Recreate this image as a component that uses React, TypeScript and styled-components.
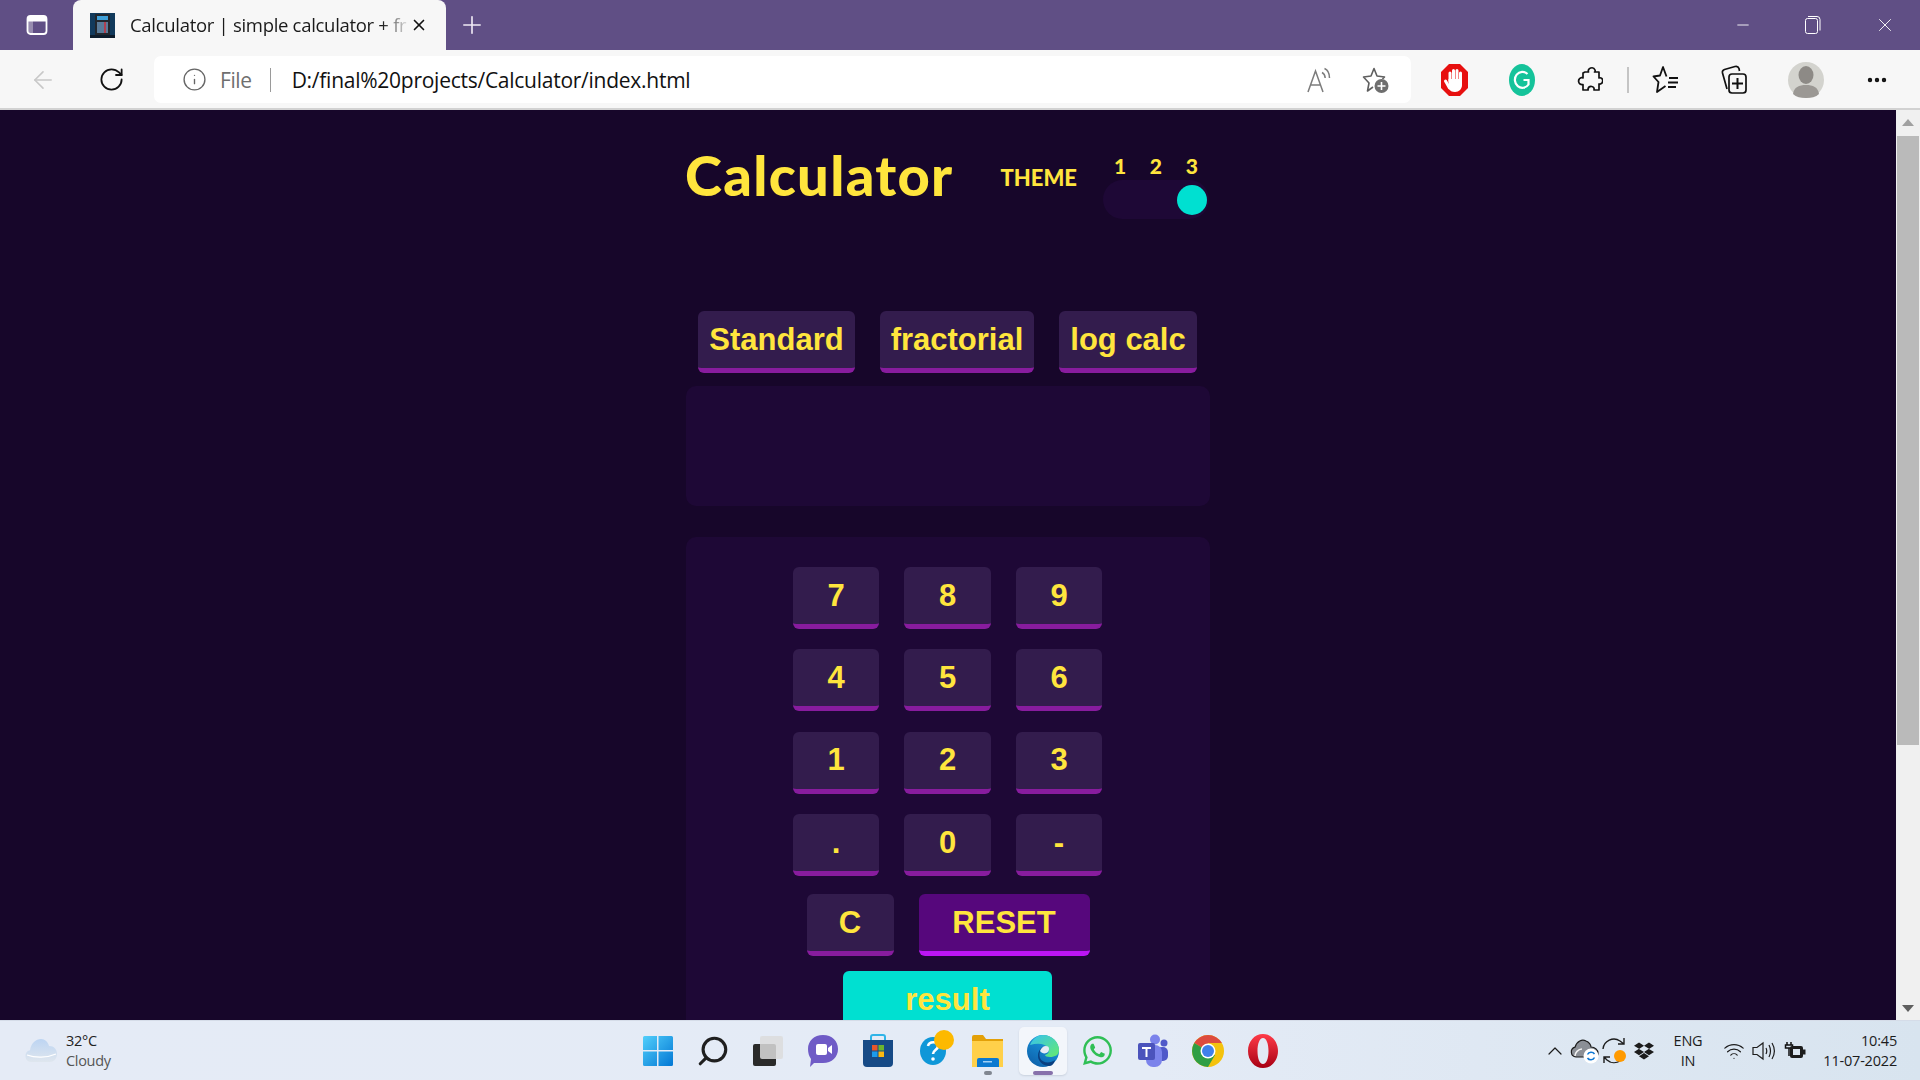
import React from 'react';
import styled, { createGlobalStyle } from 'styled-components';
import { FaDropbox, FaWhatsapp } from 'react-icons/fa';
import { X, Plus, Minus, ArrowLeft, RotateCw, Info, MoreHorizontal, ChevronUp, Search, Wifi } from 'lucide-react';

const GlobalStyle = createGlobalStyle`
  html, body {
    margin: 0;
    height: 100%;
    overflow: hidden;
    font-family: "Open Sans", "Liberation Sans", sans-serif;
  }
  * { box-sizing: border-box; }
`;

const Screen = styled.div`
  width: 1920px;
  height: 1080px;
  display: flex;
  flex-direction: column;
  overflow: hidden;
`;

/* browser chrome */
const TabBar = styled.div`
  height: 50px;
  flex: none;
  display: flex;
  align-items: stretch;
  background: #604f85;
  color: #fff;
`;
const TabToggle = styled.div`
  width: 73px;
  display: flex;
  align-items: center;
  justify-content: center;
`;
const Tab = styled.div`
  width: 373px;
  display: flex;
  align-items: center;
  padding: 0 18px 0 17px;
  background: #f7f7f7;
  border-radius: 8px 8px 0 0;
  color: #1a1a1a;
`;
const TabTitle = styled.span`
  flex: 1;
  margin-left: 15px;
  padding-bottom: 2px;
  font-size: 18.5px;
  letter-spacing: -0.3px;
  white-space: nowrap;
  -webkit-mask-image: linear-gradient(to right, #000 90%, transparent 100%);
  mask-image: linear-gradient(to right, #000 90%, transparent 100%);
`;
const NewTab = styled.div`
  margin-left: 12px;
  width: 28px;
  display: flex;
  align-items: center;
  justify-content: center;
`;
const WindowControls = styled.div`
  margin-left: auto;
  display: flex;
  align-items: center;
  padding-right: 24px;
  gap: 52px;
`;
const Toolbar = styled.div`
  height: 60px;
  flex: none;
  display: flex;
  align-items: center;
  background: #f7f7f7;
  border-bottom: 2px solid #d2d2d2;
  padding-top: 1px;
`;
const NavSlot = styled.div`
  width: 69px;
  display: flex;
  justify-content: center;
  margin-left: ${(p: { $ml?: number }) => p.$ml ?? 0}px;
`;
const AddressBar = styled.div`
  width: 1257px;
  height: 47px;
  margin-left: 8px;
  display: flex;
  align-items: center;
  padding-left: 28px;
  background: #fff;
  border-radius: 7px;
`;
const FileLabel = styled.span`
  margin-left: 13px;
  font-size: 21px;
  letter-spacing: -0.4px;
  color: #6f6f6f;
`;
const AddressSep = styled.span`
  width: 1px;
  height: 24px;
  margin: 0 21px 0 18px;
  background: #9a9a9a;
`;
const Url = styled.span`
  font-size: 21px;
  letter-spacing: -0.26px;
  color: #111;
`;
const AddressIcons = styled.div`
  margin-left: auto;
  display: flex;
  align-items: center;
  gap: 29px;
  padding-right: 21px;
`;
const ToolIcons = styled.div`
  display: flex;
  align-items: center;
  margin-left: 9px;
`;
const ToolSlot = styled.div<{ $w?: number }>`
  width: ${(p) => p.$w ?? 68}px;
  display: flex;
  justify-content: center;
  align-items: center;
`;
const ToolSep = styled.span`
  width: 2px;
  height: 26px;
  background: #c4c4c4;
  margin: 0 3px;
`;

/* page */
const Viewport = styled.div`
  flex: 1;
  min-height: 0;
  display: flex;
`;
const Page = styled.main`
  flex: 1;
  overflow: hidden;
  display: flex;
  align-items: flex-start;
  justify-content: center;
  background: #17062a;
`;
const Calculator = styled.div`
  width: 524px;
  flex: none;
  display: flex;
  flex-direction: column;
  align-items: center;
`;
const Header = styled.header`
  width: 100%;
  height: 201px;
  flex: none;
  display: flex;
  align-items: flex-start;
  color: #ffe53d;
  font-family: Lato, "Liberation Sans", sans-serif;
`;
const Title = styled.h1`
  flex: none;
  margin: 29px 0 0 -1px;
  font-size: 56px;
  line-height: 72px;
  font-weight: 900;
  letter-spacing: 1.3px;
`;
const ThemeLabel = styled.span`
  flex: none;
  margin: 54px 0 0 47px;
  font-size: 22px;
  line-height: 28px;
  font-weight: 900;
`;
const ThemePicker = styled.div`
  flex: none;
  margin: 43px 0 0 26px;
  width: 106px;
`;
const ThemeNumbers = styled.div`
  display: flex;
  justify-content: space-between;
  padding: 0 11px 0 11px;
  font-size: 21px;
  line-height: 26px;
  font-weight: 900;
`;
const Toggle = styled.div`
  height: 39px;
  margin-top: 1px;
  display: flex;
  align-items: center;
  justify-content: flex-end;
  padding-right: 2px;
  border-radius: 20px;
  background: #1e0836;
`;
const Knob = styled.span`
  width: 30px;
  height: 30px;
  border-radius: 50%;
  background: #00e0d1;
`;
const Modes = styled.div`
  flex: none;
  display: flex;
  gap: 25px;
  margin-left: -1px;
`;
const Key = styled.button<{ $width?: number; $variant?: 'plain' | 'strong' | 'accent' }>`
  width: ${(p) => (p.$width ? `${p.$width}px` : 'auto')};
  height: 62px;
  flex: none;
  padding: 0;
  border: 0;
  border-bottom: 5px solid ${(p) => (p.$variant === 'strong' ? '#bc15f4' : '#881c9e')};
  border-radius: 6px;
  background: ${(p) => (p.$variant === 'strong' ? '#56077c' : p.$variant === 'accent' ? '#00e0d1' : '#331c4d')};
  color: #ffe53d;
  font-family: "Liberation Sans", Arial, sans-serif;
  font-size: 31px;
  font-weight: 700;
  text-align: center;
`;
const ResultKey = styled(Key)`
  margin-left: -1px;
`;
const Panel = styled.section`
  width: 100%;
  flex: none;
  background: #1e0836;
  border-radius: 10px;
`;
const Display = styled(Panel)`
  height: 120px;
  margin-top: 13px;
`;
const Keypad = styled(Panel)`
  margin-top: 31px;
  height: 620px;
  padding-top: 30px;
  display: flex;
  flex-direction: column;
  align-items: center;
`;
const Digits = styled.div`
  display: grid;
  grid-template-columns: 86px 87px 86px;
  column-gap: 25px;
  row-gap: 20.4px;
  margin-left: -1px;
`;
const ActionRow = styled.div`
  display: flex;
  gap: 25px;
  margin: 18px 0 15px;
`;
const Scrollbar = styled.div`
  width: 24px;
  flex: none;
  display: flex;
  flex-direction: column;
  align-items: center;
  background: #f0f0f0;
`;
const ScrollArrow = styled.span<{ $down?: boolean }>`
  width: 0;
  height: 0;
  flex: none;
  margin: ${(p) => (p.$down ? 'auto 0 8px' : '9px 0 10px')};
  border-left: 6px solid transparent;
  border-right: 6px solid transparent;
  ${(p) => (p.$down ? 'border-top: 7px solid #5f5f5f;' : 'border-bottom: 7px solid #a0a0a0;')}
`;
const ScrollThumb = styled.span`
  width: 22px;
  height: 609px;
  flex: none;
  background: #bababa;
`;

/* taskbar */
const Taskbar = styled.footer`
  height: 60px;
  flex: none;
  display: grid;
  grid-template-columns: 1fr auto 1fr;
  align-items: center;
  background: linear-gradient(to right, #e5ebf6, #e4ebf6 60%, #d8e4ef);
  border-top: 1px solid #d5dce8;
`;
const Weather = styled.div`
  display: flex;
  align-items: center;
  gap: 9px;
  padding-left: 25px;
`;
const WeatherText = styled.div`
  font-size: 14.5px;
  line-height: 20px;
  letter-spacing: -0.3px;
  color: #222;
`;
const WeatherSub = styled.div`
  color: #555;
`;
const Apps = styled.div`
  display: flex;
`;
const AppSlot = styled.div<{ $active?: boolean }>`
  width: 55px;
  height: 54px;
  position: relative;
  isolation: isolate;
  display: flex;
  align-items: center;
  justify-content: center;
  ${(p) =>
    p.$active &&
    `&::before {
      content: '';
      position: absolute;
      z-index: -1;
      top: 3px;
      left: 3.5px;
      width: 48px;
      height: 48px;
      border-radius: 5px;
      background: #f3f6fb;
      box-shadow: 0 1px 2px #c9d1dd;
    }`}
`;
const AppDot = styled.span<{ $active?: boolean }>`
  position: absolute;
  bottom: 3px;
  left: 50%;
  height: 4px;
  border-radius: 2px;
  transform: translateX(-50%);
  width: ${(p) => (p.$active ? 20 : 8)}px;
  background: ${(p) => (p.$active ? '#8771ab' : '#808690')};
`;
const Tray = styled.div`
  display: flex;
  align-items: center;
  justify-content: flex-end;
  padding-right: 23px;
  color: #1c1c1c;
`;
const TraySlot = styled.div<{ $w: number }>`
  width: ${(p) => p.$w}px;
  display: flex;
  justify-content: center;
  align-items: center;
`;
const TrayText = styled.div<{ $align?: string }>`
  width: 100%;
  font-size: 14.5px;
  line-height: 20px;
  letter-spacing: -0.2px;
  text-align: ${(p) => p.$align ?? 'center'};
`;

const PanelIcon = () => (
  <svg width="24" height="24" viewBox="0 0 24 24" fill="none">
    <rect x="2.5" y="3" width="19" height="18" rx="3" stroke="#fff" strokeWidth="1.8" />
    <rect x="3" y="3.5" width="18" height="5" fill="#fff" />
    <rect x="3" y="8" width="5" height="12" fill="#fff" opacity="0.35" />
  </svg>
);

const Favicon = () => (
  <svg width="25" height="25" viewBox="0 0 25 25">
    <rect width="25" height="25" fill="#123a5c" />
    <rect x="5" y="1" width="15" height="22" rx="1" fill="#22272e" />
    <rect x="7" y="3" width="11" height="4" fill="#3fa0d8" />
    <rect x="7" y="9" width="11" height="11" fill="#5a7b99" />
    <rect x="14" y="9" width="2" height="11" fill="#b04050" />
    <rect y="22" width="25" height="3" fill="#0d1c2b" />
  </svg>
);

const RestoreIcon = () => (
  <svg width="18" height="20" viewBox="0 0 18 20" fill="none" stroke="#fff" strokeWidth="1">
    <rect x="1.5" y="3.5" width="12" height="15" rx="2" />
    <path d="M4 1.5h9a3 3 0 0 1 3 3v11" />
  </svg>
);

const ReadAloud = () => (
  <svg width="28" height="28" viewBox="0 0 28 28" fill="none" stroke="#7c7c7c" strokeWidth="1.5">
    <path d="M3 26 10.5 5 18 26M5.5 19h10" />
    <path d="M17 6.5c2 1 3 3 3.2 5.5M19.5 2.5c3.500 1.500 5 5 5 9.500" />
  </svg>
);

const FavAdd = () => (
  <svg width="28" height="28" viewBox="0 0 28 28" fill="none">
    <path d="M11 21 5.500 25 7 17 1.500 11l7.500-1L12 2.500 15 10l7.500 1-2 2" stroke="#5f5f5f" strokeWidth="1.600" strokeLinejoin="round" />
    <circle cx="19.500" cy="20" r="7" fill="#6e6e6e" />
    <path d="M19.500 16v8M15.500 20h8" stroke="#fff" strokeWidth="1.600" />
  </svg>
);

const StopHand = () => (
  <svg width="27" height="32" viewBox="0 0 27 32">
    <path d="M8 0h11l8 8v16l-8 8H8l-8-8V8z" fill="#e7100f" />
    <path d="M9 17V9M12.500 16V6.500M16 16V6.500M19.500 17V9" stroke="#fff" strokeWidth="3" strokeLinecap="round" />
    <path d="M7.500 15h13.500v6c0 4-3 7-7 7-3 0-5-1-6.500-4z" fill="#fff" />
    <path d="M4.500 17l4 7" stroke="#fff" strokeWidth="3" strokeLinecap="round" />
  </svg>
);

const Grammarly = () => (
  <svg width="26" height="32" viewBox="0 0 26 32">
    <ellipse cx="13" cy="16" rx="13" ry="16" fill="#15c39a" />
    <path d="M18.500 10a7.500 8 0 1 0 1 10.500V16h-5" fill="none" stroke="#fff" strokeWidth="2.200" />
  </svg>
);

const Puzzle = () => (
  <svg width="26" height="30" viewBox="0 0 26 30" fill="none" stroke="#111" strokeWidth="1.700" strokeLinejoin="round">
    <path d="M8 7h3.500c-1.500-4 5-6 6.500-2 .4 1 0 2-.5 2H22v6c4-1.500 5.500 5 .8 6.200-.2 0-.5 0-.8-.2v6h-5c1-4-5-5-6-1 0 .4 0 .7.200 1H6v-5.500c-5 1-6-5.500-1.500-7 .5 0 1 0 1.500.500V8z" />
  </svg>
);

const Favorites = () => (
  <svg width="28" height="30" viewBox="0 0 28 30" fill="none" stroke="#111" strokeWidth="1.800" strokeLinejoin="round">
    <path d="M14.500 11.500 11 2 8 10.500 1.500 11.500l5 5.500L5 27l8.500-6" />
    <path d="M17 13h9M16 17.500h10M16 22h8" />
  </svg>
);

const Collections = () => (
  <svg width="28" height="32" viewBox="0 0 28 32" fill="none" stroke="#111" strokeWidth="1.700" strokeLinejoin="round">
    <path d="M7 25 2.500 9c-.5-2 .5-3 2-3.500L15 2.500c2-.5 3.500.5 4 2l.5 2.500" />
    <rect x="9" y="10" width="17" height="19" rx="3" />
    <path d="M17.500 14v11M12 19.500h11" strokeWidth="2" />
  </svg>
);

const Avatar = () => (
  <svg width="36" height="36" viewBox="0 0 36 36">
    <ellipse cx="18" cy="18" rx="18" ry="18" fill="#d3d3ce" />
    <ellipse cx="18" cy="13" rx="7.500" ry="9" fill="#8d8a86" />
    <path d="M5 32c1-7 6-9 13-9s12 2 13 9c-3 3-8 4-13 4s-10-1-13-4z" fill="#9b9894" />
  </svg>
);

const CloudIcon = () => (
  <svg width="32" height="24" viewBox="0 0 32 24">
    <defs>
      <linearGradient id="cloud" x1="0" y1="0" x2="0" y2="1">
        <stop offset="0" stopColor="#bcd4f2" />
        <stop offset="1" stopColor="#dfe6ee" />
      </linearGradient>
    </defs>
    <path d="M6 23a6 6 0 0 1-1-11.800C6 4 11 0 16 0c4 0 7 3 8 7 5 0 8 3.500 8 8 0 5-3.500 8-7 8z" fill="url(#cloud)" />
    <path d="M2 16c8 3 20 3 29-1" stroke="#fff" strokeWidth="1.200" fill="none" />
  </svg>
);

const WindowsLogo = () => (
  <svg width="30" height="30" viewBox="0 0 30 30">
    <defs>
      <linearGradient id="win" x1="0" y1="0" x2="1" y2="1">
        <stop offset="0" stopColor="#52cffb" />
        <stop offset="1" stopColor="#0277d4" />
      </linearGradient>
    </defs>
    <path d="M0 1.500A1.500 1.500 0 0 1 1.500 0H14v14H0zM15.500 0H28.500A1.500 1.500 0 0 1 30 1.500V14H15.500zM0 15.500H14V30H1.500A1.500 1.500 0 0 1 0 28.500zM15.500 15.500H30V28.500A1.500 1.500 0 0 1 28.500 30H15.500z" fill="url(#win)" />
  </svg>
);

const TaskView = () => (
  <svg width="30" height="30" viewBox="0 0 30 30">
    <rect x="0" y="8" width="23" height="22" rx="2" fill="#2a2a2a" />
    <rect x="7" y="0" width="23" height="23" rx="2" fill="#dcdcdc" fillOpacity="0.85" />
  </svg>
);

const Meet = () => (
  <svg width="30" height="34" viewBox="0 0 30 34">
    <path d="M15 1c9 0 15 6 15 14s-6 14-15 14H6l-4 4 1-8C1 22 0 19 0 15 0 7 6 1 15 1z" fill="#6f5bc6" />
    <rect x="8" y="10" width="11" height="11" rx="2" fill="#fff" />
    <path d="M20 14l4-3v9l-4-3z" fill="#fff" />
  </svg>
);

const Store = () => (
  <svg width="30" height="33" viewBox="0 0 30 33">
    <path d="M8 6V3a2 2 0 0 1 2-2h10a2 2 0 0 1 2 2v3" fill="none" stroke="#2fb4e8" strokeWidth="2" />
    <path d="M0 6h30v23a4 4 0 0 1-4 4H4a4 4 0 0 1-4-4z" fill="#164a86" />
    <rect x="9" y="11" width="5.500" height="5.500" fill="#e8562a" />
    <rect x="15.500" y="11" width="5.500" height="5.500" fill="#6bb52e" />
    <rect x="9" y="17.500" width="5.500" height="5.500" fill="#1c9bec" />
    <rect x="15.500" y="17.500" width="5.500" height="5.500" fill="#fbb810" />
  </svg>
);

const Help = () => (
  <svg width="44" height="42" viewBox="0 0 44 42">
    <ellipse cx="22" cy="21" rx="13" ry="14" fill="#0f97d8" />
    <path d="M17 16c1-5 10-5 10 0 0 4-5 4-5 8" fill="none" stroke="#fff" strokeWidth="2.600" />
    <circle cx="22" cy="29" r="1.800" fill="#fff" />
    <ellipse cx="33" cy="10" rx="10" ry="10" fill="#fdb900" />
  </svg>
);

const Folder = () => (
  <svg width="31" height="32" viewBox="0 0 31 32">
    <path d="M0 2a2 2 0 0 1 2-2h9l3 4h17v6H0z" fill="#e3a008" />
    <path d="M0 6h31v26H0z" fill="#ffd04a" />
    <path d="M5 32v-7a2 2 0 0 1 2-2h18a2 2 0 0 1 2 2v7z" fill="#0b79d0" />
    <rect x="11" y="26" width="9" height="1.500" fill="#9fd0f5" />
  </svg>
);

const Edge = () => (
  <svg width="32" height="32" viewBox="0 0 32 32">
    <defs>
      <linearGradient id="edgeA" x1="0" y1="1" x2="0.6" y2="0">
        <stop offset="0" stopColor="#0c59a4" />
        <stop offset="1" stopColor="#1b9de2" />
      </linearGradient>
      <linearGradient id="edgeB" x1="0" y1="0" x2="1" y2="1">
        <stop offset="0" stopColor="#35c1f1" />
        <stop offset="1" stopColor="#66eb6e" />
      </linearGradient>
    </defs>
    <circle cx="16" cy="16" r="16" fill="url(#edgeA)" />
    <path d="M3 10C6 3 11 0 16 0c9 0 16 7 16 15 0 5-4 7-9 7-3 0-5-1-5-2 3-1 5-3 3-7-3-5-11-5-18-3z" fill="url(#edgeB)" />
    <path d="M28 25c-5 4-13 3-15-2-2-6 2-11 7-12-5 0-9 4-9 10 0 6 6 10 11 10 3 0 5-2 6-6z" fill="#0a3f80" />
    <path d="M13 16c1-3 3-5 6-5 3 0 4 3 2 6-2 2-6 2-8-1z" fill="#e5ebf6" />
  </svg>
);

const Teams = () => (
  <svg width="30" height="34" viewBox="0 0 30 34">
    <circle cx="17" cy="5.500" r="5" fill="#7b83eb" />
    <circle cx="26" cy="9" r="3.500" fill="#5059c9" />
    <rect x="19" y="13" width="11" height="14" rx="5" fill="#5059c9" />
    <rect x="8" y="11" width="16" height="22" rx="7" fill="#7b83eb" />
    <rect x="0" y="9" width="17" height="17" rx="2" fill="#4b53bc" />
    <path d="M4 13h9v2H9.500v8h-2v-8H4z" fill="#fff" />
  </svg>
);

const Chrome = () => (
  <svg width="32" height="32" viewBox="0 0 32 32">
    <circle cx="16" cy="16" r="16" fill="#f4c20d" />
    <path d="M16 16 2.200 8A16 16 0 0 1 29.900 8H16z" fill="#dd4b3e" />
    <path d="M16 16 2.200 8A16 16 0 0 0 16 32l7-12z" fill="#2f9e44" />
    <circle cx="16" cy="16" r="7.500" fill="#fff" />
    <circle cx="16" cy="16" r="6" fill="#3f80ea" />
  </svg>
);

const Opera = () => (
  <svg width="30" height="34" viewBox="0 0 30 34">
    <defs>
      <linearGradient id="opera" x1="0" y1="0" x2="0" y2="1">
        <stop offset="0" stopColor="#ff3b48" />
        <stop offset="1" stopColor="#a70014" />
      </linearGradient>
    </defs>
    <path fillRule="evenodd" d="M15 0c8.500 0 15 7.500 15 17s-6.500 17-15 17S0 26.500 0 17 6.500 0 15 0zm0 4c-3.500 0-5.500 6-5.500 13s2 13 5.500 13 5.500-6 5.500-13-2-13-5.500-13z" fill="url(#opera)" />
  </svg>
);

const SyncIcon = () => (
  <svg width="30" height="30" viewBox="0 0 30 30" fill="none" stroke="#1c1c1c" strokeWidth="1.400">
    <path d="M3 13a11 11 0 0 1 17-8l4 3M24 2v6h-6" />
    <path d="M20 25a11 11 0 0 1-13 -1l-3-3M4 27v-6h6" />
    <circle cx="20" cy="20" r="6" fill="#ff9a00" stroke="none" />
  </svg>
);

const OneDrive = () => (
  <svg width="30" height="26" viewBox="0 0 30 26">
    <path d="M6 19a5 5 0 0 1-1-9.800C7 3 12 1 16 3c3 1 5 4 5 6 4 0 7 3 7 6 0 2-1 4-3 4z" fill="#8b8f96" stroke="#1c1c1c" strokeWidth="1.200" />
    <path d="M5 18c0-3 3-7 7-7" stroke="#f2f2f2" strokeWidth="1.500" fill="none" />
    <circle cx="21" cy="18" r="7.500" fill="#fff" />
    <path d="M17.500 16.500a4 4 0 0 1 7-.5M24.500 19.500a4 4 0 0 1-7 .5" fill="none" stroke="#0f78d4" strokeWidth="1.500" />
  </svg>
);

const Speaker = () => (
  <svg width="24" height="22" viewBox="0 0 24 22" fill="none" stroke="#1c1c1c" strokeWidth="1.200">
    <path d="M1 7.500h4L11 3v16l-6-4.500H1z" />
    <path d="M14 8c1 2 1 4 0 6M17 5c2 4 2 8 0 12M20 3c3 5 3 11 0 16" />
  </svg>
);

const Battery = () => (
  <svg width="22" height="20" viewBox="0 0 22 20">
    <path d="M3 1v3M7 1v3M1.500 4h7v3h-7zM5 7v8" stroke="#111" strokeWidth="1.500" fill="none" />
    <rect x="6" y="5" width="13" height="12" rx="2" fill="#1c1c1c" />
    <rect x="19" y="8.500" width="2.500" height="5" fill="#1c1c1c" />
    <rect x="9" y="8" width="7" height="6" fill="#dbe5ef" />
  </svg>
);

const digits = ['7', '8', '9', '4', '5', '6', '1', '2', '3', '.', '0', '-'];

const App: React.FC = () => {
  return (
    <Screen>
      <GlobalStyle />
      <TabBar>
        <TabToggle>
          <PanelIcon />
        </TabToggle>
        <Tab>
          <Favicon />
          <TabTitle>Calculator | simple calculator + fr</TabTitle>
          <X size={18} color="#111" strokeWidth={2.2} />
        </Tab>
        <NewTab>
          <Plus size={28} color="#efeaf5" strokeWidth={1.4} />
        </NewTab>
        <WindowControls>
          <Minus size={18} color="#fff" strokeWidth={1.2} />
          <RestoreIcon />
          <X size={22} color="#fff" strokeWidth={1} />
        </WindowControls>
      </TabBar>
      <Toolbar>
        <NavSlot $ml={8}>
          <ArrowLeft size={28} color="#c8c8c8" strokeWidth={1.4} />
        </NavSlot>
        <NavSlot>
          <RotateCw size={27} color="#111" strokeWidth={1.6} />
        </NavSlot>
        <AddressBar>
          <Info size={25} color="#666" strokeWidth={1.3} />
          <FileLabel>File</FileLabel>
          <AddressSep />
          <Url>D:/final%20projects/Calculator/index.html</Url>
          <AddressIcons>
            <ReadAloud />
            <FavAdd />
          </AddressIcons>
        </AddressBar>
        <ToolIcons>
          <ToolSlot><StopHand /></ToolSlot>
          <ToolSlot><Grammarly /></ToolSlot>
          <ToolSlot><Puzzle /></ToolSlot>
          <ToolSep />
          <ToolSlot><Favorites /></ToolSlot>
          <ToolSlot><Collections /></ToolSlot>
          <ToolSlot $w={76}><Avatar /></ToolSlot>
          <ToolSlot $w={66}><MoreHorizontal size={24} color="#111" strokeWidth={2.4} /></ToolSlot>
        </ToolIcons>
      </Toolbar>
      <Viewport>
        <Page>
          <Calculator>
            <Header>
              <Title>Calculator</Title>
              <ThemeLabel>THEME</ThemeLabel>
              <ThemePicker>
                <ThemeNumbers>
                  <span>1</span>
                  <span>2</span>
                  <span>3</span>
                </ThemeNumbers>
                <Toggle>
                  <Knob />
                </Toggle>
              </ThemePicker>
            </Header>
            <Modes>
              <Key $width={157}>Standard</Key>
              <Key $width={154}>fractorial</Key>
              <Key $width={138}>log calc</Key>
            </Modes>
            <Display />
            <Keypad>
              <Digits>
                {digits.map((d) => (
                  <Key key={d}>{d}</Key>
                ))}
              </Digits>
              <ActionRow>
                <Key $width={87}>C</Key>
                <Key $width={171} $variant="strong">RESET</Key>
              </ActionRow>
              <ResultKey $width={209} $variant="accent">result</ResultKey>
            </Keypad>
          </Calculator>
        </Page>
        <Scrollbar>
          <ScrollArrow />
          <ScrollThumb />
          <ScrollArrow $down />
        </Scrollbar>
      </Viewport>
      <Taskbar>
        <Weather>
          <CloudIcon />
          <WeatherText>
            32°C
            <WeatherSub>Cloudy</WeatherSub>
          </WeatherText>
        </Weather>
        <Apps>
          <AppSlot><WindowsLogo /></AppSlot>
          <AppSlot><Search size={34} color="#1f1f1f" strokeWidth={2.2} style={{ transform: 'scaleX(-1)' }} /></AppSlot>
          <AppSlot><TaskView /></AppSlot>
          <AppSlot><Meet /></AppSlot>
          <AppSlot><Store /></AppSlot>
          <AppSlot><Help /></AppSlot>
          <AppSlot><Folder /><AppDot /></AppSlot>
          <AppSlot $active><Edge /><AppDot $active /></AppSlot>
          <AppSlot><FaWhatsapp size={33} color="#2fbf55" /></AppSlot>
          <AppSlot><Teams /></AppSlot>
          <AppSlot><Chrome /></AppSlot>
          <AppSlot><Opera /></AppSlot>
        </Apps>
        <Tray>
          <TraySlot $w={30}><ChevronUp size={24} strokeWidth={1.2} /></TraySlot>
          <TraySlot $w={30}><OneDrive /></TraySlot>
          <TraySlot $w={30}><SyncIcon /></TraySlot>
          <TraySlot $w={27}><FaDropbox size={20} /></TraySlot>
          <TraySlot $w={62}><TrayText>ENG<br />IN</TrayText></TraySlot>
          <TraySlot $w={30}><Wifi size={22} strokeWidth={1.3} /></TraySlot>
          <TraySlot $w={30}><Speaker /></TraySlot>
          <TraySlot $w={32}><Battery /></TraySlot>
          <TraySlot $w={86}><TrayText $align="right">10:45<br />11-07-2022</TrayText></TraySlot>
        </Tray>
      </Taskbar>
    </Screen>
  );
};

export default App;
